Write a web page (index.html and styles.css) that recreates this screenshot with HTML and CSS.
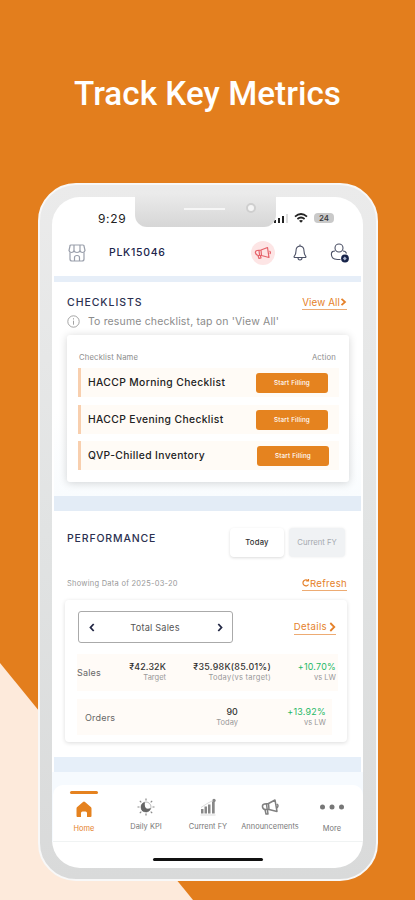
FILE: index.html
```html
<!DOCTYPE html>
<html lang="en">
<head>
    <meta charset="UTF-8">
    <meta name="viewport" content="width=device-width, initial-scale=1.0">
    <title>Track Key Metrics</title>
    <link rel="stylesheet" href="styles.css">
</head>
<body>
    <div class="poster">
        <h1>Track Key Metrics</h1>

        <div class="phone">
            <div class="notch"><span class="speaker"></span><span class="camera"></span></div>
            <div class="screen">
                <div class="status">
                    <span class="time">9:29</span>
                    <svg class="signal" width="16" height="10" viewBox="0 0 16 10">
                        <path d="M1 7h2v3H1zM5 5h2v5H5zM9 3h2v7H9z" fill="#222"/>
                        <path d="M13 1h2v9h-2z" fill="#ddd"/>
                    </svg>
                    <svg class="wifi" width="14" height="10" viewBox="0 0 14 10" fill="none" stroke="#222" stroke-width="1.8">
                        <path d="M1 3.6Q7-1.5 13 3.6M3.4 6Q7 3 10.6 6"/>
                        <path d="M7 9.8L5 7.8Q7 6.3 9 7.8Z" fill="#222" stroke="none"/>
                    </svg>
                    <span class="battery">24</span>
                </div>

                <div class="topbar">
                    <svg class="store" width="18" height="18" viewBox="0 0 18 18" fill="none" stroke="#9a9fab" stroke-width="1.2" stroke-linejoin="round">
                        <path d="M3 1h12q1 0 1 1l1 4.500q-.5 2-2.500 2T12 6.500q-.5 2-3 2t-3-2q-.5 2-2.500 2T1 6.500L2 2q0-1 1-1zM6 1v5.500M12 1v5.500"/>
                        <path d="M2 8.500V15q0 2 2 2h10q2 0 2-2V8.500M6.500 17v-3.500q0-2 2.500-2t2.500 2V17"/>
                    </svg>
                    <span class="code">PLK15046</span>
                    <span class="alert">
                        <svg width="18" height="14" viewBox="0 0 18 14" fill="none" stroke="#e5626a" stroke-width="1.2" stroke-linejoin="round">
                            <path d="M7 4L13.500 1.500 15 11.500 7.500 9.500zM7 4L3 4.500Q1 5 1.500 7T4 9.500H7.500M4 9.500l1 3 2-.5-.6-2.300M5 4.500l.6 5M15.500 5q1.500 1 .5 3"/>
                        </svg>
                    </span>
                    <svg class="bell" width="14" height="18" viewBox="0 0 14 18" fill="none" stroke="#4c5166" stroke-width="1.1" stroke-linejoin="round">
                        <path d="M7 2Q3 2.300 3 7q0 3-1.800 5.300-.5 1.200.8 1.200h10q1.300 0 .8-1.200Q11 10 11 7q0-4.700-4-5zM5 13.800q0 2.200 2 2.200t2-2.200M7 .5V2"/>
                    </svg>
                    <svg class="user" width="20" height="20" viewBox="0 0 20 20" fill="none" stroke="#4c5166" stroke-width="1.1">
                        <circle cx="9" cy="5" r="4"/>
                        <path d="M5 8Q2 8 1.500 10q-.8 6.500 6 6.500h3M13 8q2.800 0 3.500 2.500"/>
                        <circle cx="15" cy="15.500" r="3.900" fill="#172349" stroke="none"/>
                        <path d="M14.800 13.500l1.900 2-1.900 2-1.900-2z" fill="#aab4cf" stroke="none"/>
                    </svg>
                </div>

                <section class="checklists">
                    <div class="head">
                        <h2>CHECKLISTS</h2>
                        <a class="link view-all">View All<svg width="7" height="8" viewBox="0 0 7 8"><path d="M1.500 .8L5 4 1.500 7.200"/></svg></a>
                    </div>
                    <div class="hint">
                        <svg width="13" height="13" viewBox="0 0 13 13" fill="none" stroke="#999" stroke-width=".9"><circle cx="6.500" cy="6.500" r="5.700"/><path d="M6.500 5.700v4M6.500 3.200v1.300"/></svg>
                        <span>To resume checklist, tap on 'View All'</span>
                    </div>
                    <div class="list-card">
                        <div class="list-head"><span>Checklist Name</span><span class="action">Action</span></div>
                        <div class="item"><span class="name">HACCP Morning Checklist</span><button>Start Filling</button></div>
                        <div class="item evening"><span class="name">HACCP Evening Checklist</span><button>Start Filling</button></div>
                        <div class="item inventory"><span class="name">QVP-Chilled Inventory</span><button>Start Filling</button></div>
                    </div>
                </section>

                <section class="performance">
                    <div class="perf-head">
                        <h2>PERFORMANCE</h2>
                        <div class="tabs"><span class="tab active">Today</span><span class="tab">Current FY</span></div>
                    </div>
                    <div class="date-row">
                        <span class="date">Showing Data of 2025-03-20</span>
                        <a class="link refresh"><svg width="8" height="8" viewBox="0 0 8 8"><path d="M6.500 5.500A3 3 0 1 1 6 1.700M4.200 1.900H6.500V0"/></svg>Refresh</a>
                    </div>
                    <div class="perf-card">
                        <div class="picker-row">
                            <div class="picker">
                                <svg width="6" height="9" viewBox="0 0 6 9"><path d="M4.700 1L1.500 4.500 4.700 8"/></svg>
                                <span>Total Sales</span>
                                <svg width="6" height="9" viewBox="0 0 6 9"><path d="M1.300 1L4.500 4.500 1.300 8"/></svg>
                            </div>
                            <a class="link details">Details<svg width="7" height="10" viewBox="0 0 7 10"><path d="M1.300 1L5.300 5 1.300 9"/></svg></a>
                        </div>
                        <div class="metric sales">
                            <span class="label">Sales</span>
                            <div class="value"><b>₹42.32K</b><small>Target</small></div>
                            <div class="value"><b class="wide">₹35.98K(85.01%)</b><small class="wide">Today(vs target)</small></div>
                            <div class="value up"><b>+10.70%</b><small>vs LW</small></div>
                        </div>
                        <div class="metric orders">
                            <span class="label">Orders</span>
                            <div class="value"></div>
                            <div class="value"><b>90</b><small>Today</small></div>
                            <div class="value up"><b>+13.92%</b><small>vs LW</small></div>
                        </div>
                    </div>
                </section>

                <div class="tray">
                    <nav>
                        <div class="nav-item active">
                            <svg width="18" height="18" viewBox="0 0 18 18"><path d="M1.500 8.500Q1.500 7.500 2.500 6.700L8 2q1-.8 2 0l5.500 4.700q1 .8 1 1.800V16q0 1-1 1H12v-4q0-1.500-1.500-1.500h-3Q6 11.500 6 13v4H2.500q-1 0-1-1z" fill="#e5821f"/></svg>
                            <span>Home</span>
                        </div>
                        <div class="nav-item">
                            <svg width="18" height="18" viewBox="0 0 18 18" stroke="#888" stroke-width="1.2" fill="none"><path d="M9 .5v2M9 15.500v2M.5 9h2M15.500 9h2M2.800 2.800l1.500 1.500M13.700 13.700l1.500 1.500M2.800 15.200l1.500-1.500M13.700 4.300l1.500-1.500"/><circle cx="9" cy="9" r="5" stroke="#aaa" stroke-width=".8"/><path d="M8 4.200A5 5 0 1 0 13.800 10Q9 12 8 8.500 7.500 6 8 4.200z" fill="#666" stroke="none"/></svg>
                            <span>Daily KPI</span>
                        </div>
                        <div class="nav-item">
                            <svg width="18" height="18" viewBox="0 0 18 18" fill="#888"><path d="M2 11h2.500v4.500H2zM5.500 8.500H8v7H5.500zM9 6.500h2.500v9H9zM13 3.500h2.700v12H13z"/><circle cx="15" cy="2.500" r="1.700"/><path d="M2 9.500L9 5l5-2.500M1.500 17h15" stroke="#ccc" stroke-width=".7" fill="none"/></svg>
                            <span>Current FY</span>
                        </div>
                        <div class="nav-item">
                            <svg width="18" height="18" viewBox="0 0 18 18" fill="none" stroke="#808080" stroke-width="1.500" stroke-linejoin="round"><path d="M7.500 5.500L14 2l2 11.500-8-2zM7.500 5.500l-4 .5Q1 6.500 1.500 9t3 2.500H8M4 11.500l1 4.500h2l-.6-4.500M5.500 6l.7 5.500M16 6q2 1.500 0 4"/></svg>
                            <span>Announcements</span>
                        </div>
                        <div class="nav-item more">
                            <svg width="26" height="18" viewBox="0 0 26 18" fill="#777"><circle cx="3.500" cy="9" r="2.500"/><circle cx="13" cy="9" r="2.500"/><circle cx="22.500" cy="9" r="2.500"/></svg>
                            <span>More</span>
                        </div>
                    </nav>
                </div>
                <div class="home-bar"></div>
            </div>
        </div>
    </div>
</body>
</html>
```
FILE: styles.css
```css
* {
    box-sizing: border-box;
}

body {
    margin: 0;
    font-family: Inter, "Noto Sans", sans-serif;
    color: #333;
}

h1, h2 {
    margin: 0;
}

svg {
    display: block;
    flex: none;
}

.poster {
    width: 415px;
    height: 900px;
    overflow: hidden;
    background: #e37e1d;
    position: relative;
}

/* light wedge in the lower left corner */
.poster::before {
    content: "";
    position: absolute;
    left: 0;
    bottom: 0;
    width: 193px;
    height: 237px;
    background: #fdeadb;
    clip-path: polygon(0 0, 100% 100%, 0 100%);
}

h1 {
    padding-top: 73px;
    height: 183px;
    text-align: center;
    color: #fff;
    font: 500 33.2px/42px Roboto, sans-serif;
    letter-spacing: 0.05px;
}

.phone {
    position: relative;
    width: 340px;
    height: 698px;
    margin-left: 38px;
    padding: 12px 13px 11px 12px;
    border: 2px solid #f8f8f8;
    border-radius: 38px;
    background: linear-gradient(#ebebeb, #e1e3e3 50%, #d9dada);
}

.notch {
    position: absolute;
    z-index: 2;
    left: 95px;
    top: 8px;
    width: 141px;
    height: 34px;
    border-radius: 0 0 12px 12px;
    background: linear-gradient(#ebebeb, #d6d6d6);
}

.speaker {
    position: absolute;
    left: 49px;
    top: 15px;
    width: 41px;
    height: 2px;
    background: #f6f6f6;
}

.camera {
    position: absolute;
    left: 111px;
    top: 10px;
    width: 10px;
    height: 10px;
    border-radius: 50%;
    border: 2px solid #cfcfcf;
    background: #f5f5f5;
}

.screen {
    display: flex;
    flex-direction: column;
    height: 671px;
    overflow: hidden;
    border-radius: 28px;
    background: #fff;
}

.status {
    display: flex;
    align-items: center;
    height: 40px;
    padding: 2px 29px 0 46px;
}

.time {
    flex: 1;
    font-size: 12px;
    letter-spacing: 0.65px;
    color: #222;
}

.wifi {
    margin: 0 6px 0 5px;
}

.battery {
    width: 20px;
    height: 10px;
    border-radius: 4px;
    background: #c9c9c9;
    text-align: center;
    font-size: 8px;
    line-height: 10px;
    font-weight: 500;
}

.topbar {
    display: flex;
    align-items: center;
    height: 45px;
    margin: 0 2px;
    padding: 0 11px 8px 14px;
    border-bottom: 6px solid #e6eef8;
}

.code {
    flex: 1;
    margin-left: 23px;
    font-size: 10.5px;
    font-weight: 500;
    letter-spacing: 0.7px;
    color: #20254b;
}

.alert {
    display: flex;
    align-items: center;
    justify-content: center;
    width: 24px;
    height: 24px;
    border-radius: 50%;
    background: #fde5e5;
}

.bell {
    margin: 0 23px 0 18px;
}

h2 {
    font-size: 10.5px;
    font-weight: 500;
    line-height: 14px;
    letter-spacing: 0.95px;
    color: #2b3050;
}

.link {
    display: flex;
    align-items: center;
    color: #e5812a;
    border-bottom: 1px solid #edab73;
}

.link svg path {
    fill: none;
    stroke: #e5812a;
    stroke-width: 1.8;
}

.checklists {
    height: 214px;
    margin: 0 2px;
    padding: 13px 12px 0 13px;
    background: linear-gradient(#fff 60%, #f9fcfe);
}

.head {
    display: flex;
    justify-content: space-between;
    height: 17px;
}

.head h2 {
    padding-top: 1px;
}

.view-all {
    height: 15px;
    margin-right: 2px;
    font-size: 9.8px;
    letter-spacing: 0.1px;
}

.hint {
    display: flex;
    align-items: center;
    gap: 8px;
    height: 18px;
    font-size: 10.5px;
    letter-spacing: 0.15px;
    color: #8b8b8b;
}

.list-card {
    height: 147px;
    margin-top: 5px;
    padding: 14px 10px 0 11px;
    border-radius: 3px;
    background: #fff;
    box-shadow: 0 1px 9px rgba(0, 0, 0, 0.17);
}

.list-head {
    display: flex;
    justify-content: space-between;
    height: 19px;
    padding: 0 3px 0 1px;
    font-size: 7.7px;
    line-height: 17px;
    letter-spacing: 0.15px;
    color: #8d8d8d;
}

.item {
    display: flex;
    align-items: center;
    justify-content: space-between;
    height: 29px;
    margin-bottom: 8px;
    padding: 0 11px 0 7px;
    border-left: 3px solid #f8cfae;
    background: #fffbf6;
}

.item.inventory {
    padding-right: 10px;
}

.item.evening {
    margin-bottom: 7px;
}

.name {
    margin-top: -1px;
    font-size: 10.3px;
    font-weight: 500;
    letter-spacing: 0.38px;
    color: #222;
}

button {
    width: 72px;
    height: 20px;
    padding: 0;
    border: none;
    border-radius: 3px;
    background: #e5831f;
    color: #fff;
    font-family: inherit;
    font-size: 6.3px;
    font-weight: 500;
    letter-spacing: 0.15px;
}

.performance {
    height: 276px;
    margin: 0 2px;
    padding: 0 14px 0 11px;
    border-top: 15px solid #e3ecf6;
    border-bottom: 15px solid #e6eff9;
}

.perf-head {
    display: flex;
    justify-content: space-between;
    padding: 17px 2px 0 2px;
}

.perf-head h2 {
    margin-top: 4px;
    letter-spacing: 0.85px;
}

.tabs {
    display: flex;
    gap: 5px;
}

.tab {
    width: 56px;
    height: 29px;
    border-radius: 4px;
    background: #f0f2f4;
    box-shadow: 0 0 3px rgba(0, 0, 0, 0.08);
    text-align: center;
    font-size: 7.7px;
    line-height: 29px;
    color: #a5a9af;
}

.tab.active {
    width: 54px;
    background: #fff;
    box-shadow: 0 1px 3px rgba(0, 0, 0, 0.14);
    font-weight: 500;
    letter-spacing: 0.2px;
    color: #333;
}

.date-row {
    display: flex;
    justify-content: space-between;
    height: 43px;
    padding: 19px 0 0 2px;
}

.date {
    font-size: 7.5px;
    line-height: 15px;
    letter-spacing: 0.25px;
    color: #999;
}

.refresh {
    height: 15px;
    font-size: 9.6px;
    letter-spacing: 0.3px;
}

.refresh svg path {
    stroke-width: 1.2;
}

.perf-card {
    height: 142px;
    padding: 11px 9px 0 12px;
    border-radius: 4px;
    background: #fff;
    box-shadow: 0 1px 4px rgba(0, 0, 0, 0.14);
}

.picker-row {
    display: flex;
    justify-content: space-between;
    padding: 0 2px 0 1px;
}

.picker {
    display: flex;
    align-items: center;
    justify-content: space-between;
    width: 155px;
    height: 32px;
    padding: 0 9px 0 10px;
    border: 1px solid #aaa;
    border-radius: 3px;
    font-size: 9.2px;
    letter-spacing: 0.2px;
    color: #555;
}

.picker span {
    margin-left: -2px;
}

.picker path {
    fill: none;
    stroke: #222744;
    stroke-width: 1.8;
}

.details {
    gap: 2px;
    height: 16px;
    margin-top: 8px;
    font-size: 9.6px;
    letter-spacing: 0.35px;
}

.metric {
    display: grid;
    grid-template-columns: 24px 65px 105px 65px;
    align-items: center;
    height: 37px;
    margin-top: 11px;
    background: #fffbf7;
}

.label {
    font-size: 9px;
    letter-spacing: 0.2px;
    color: #666;
}

.orders {
    grid-template-columns: 40px 50px 63px 88px;
    height: 36px;
    margin: 8px 6px 0 0;
    padding-left: 8px;
}

.value {
    text-align: right;
    line-height: 10px;
}

.value b, .value small {
    display: block;
}

.value b {
    font-size: 8.9px;
    font-weight: 500;
    letter-spacing: 0.15px;
    color: #333;
}

.value small {
    padding-top: 1px;
    font-size: 7.5px;
    color: #999;
}

.value b.wide, .value small.wide {
    letter-spacing: 0.27px;
}

.value.up b {
    font-weight: 400;
    letter-spacing: 0.25px;
    color: #25b866;
}

.tray {
    height: 70px;
    padding: 13px 0 0 1px;
    background: #f6fafe;
}

nav {
    display: grid;
    grid-template-columns: 62px 62px 62px 62px 62px;
    height: 57px;
    border-radius: 10px 10px 0 0;
    border-bottom: 1px solid #f0f3f3;
    background: #fff;
}

.nav-item {
    display: flex;
    flex-direction: column;
    align-items: center;
    padding-top: 13px;
    font-size: 7.4px;
    letter-spacing: 0.05px;
    color: #777;
}

.nav-item span {
    margin-top: 6px;
    line-height: 10px;
}

.nav-item.active {
    padding-top: 6px;
    color: #e5812a;
}

.nav-item.active::before {
    content: "";
    width: 28px;
    height: 3px;
    margin-bottom: 6px;
    border-radius: 2px;
    background: #e5821f;
}

.more span {
    padding-top: 2px;
}

.home-bar {
    width: 110px;
    height: 3px;
    margin: 16px auto 0;
    border-radius: 2px;
    background: #111;
}
```
